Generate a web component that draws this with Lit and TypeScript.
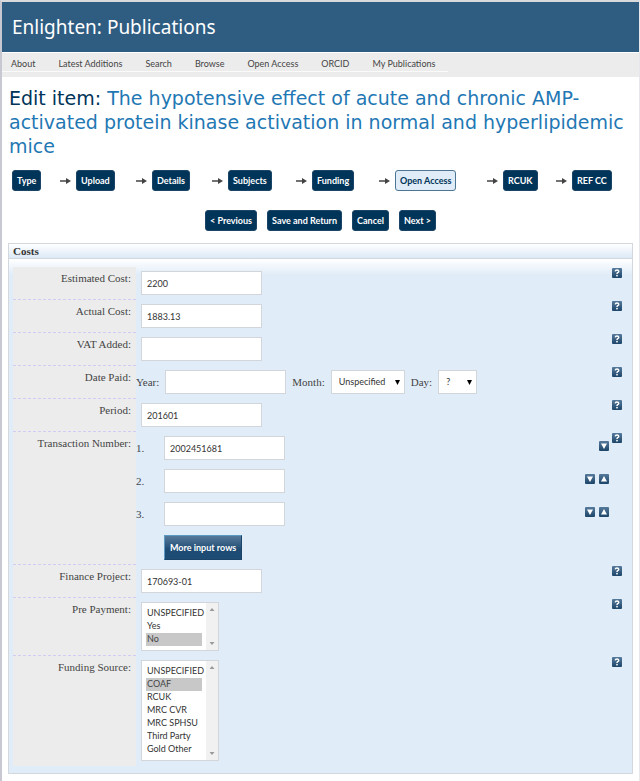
import { LitElement, html, css, svg, nothing } from "lit";
import { customElement, property } from "lit/decorators.js";

const sans = css`Lato, "Noto Sans", sans-serif`;
const serif = css`"Liberation Serif", "DejaVu Serif", serif`;

@customElement("icon-button")
class IconButton extends LitElement {
  @property() kind: "help" | "up" | "down" = "help";
  @property() label = "";

  static styles = css`
    :host {
      display: block;
      width: 10px;
      height: 10px;
    }
    .btn {
      display: block;
      width: 10px;
      height: 10px;
      padding: 0;
      border: 0;
      border-radius: 1px;
      background: linear-gradient(#567a9c, #1c4569);
      color: #fff;
    }
    .glyph {
      display: block;
      width: 10px;
      height: 10px;
    }
  `;

  render() {
    const shape =
      this.kind === "up"
        ? svg`<path d="M5 2L8 7.500H2Z" fill="#fff"/>`
        : this.kind === "down"
          ? svg`<path d="M5 8L2 2.500H8Z" fill="#fff"/>`
          : svg`<path d="M3.200 3.300Q3.400 2 5 2T6.800 3.300Q6.800 4.200 5.700 4.700Q5 5.100 5 6" fill="none" stroke="#fff" stroke-width="1.400"/><rect x="4.200" y="6.900" width="1.600" height="1.500" fill="#fff"/>`;
    return html`<button class="btn" type="button" aria-label=${this.label}>
      <svg class="glyph" viewBox="0 0 10 10" aria-hidden="true">${shape}</svg>
    </button>`;
  }
}

@customElement("list-box")
class ListBox extends LitElement {
  @property({ type: Array }) options: string[] = [];
  @property() value = "";
  @property() label = "";

  static styles = css`
    :host {
      display: block;
    }
    .box {
      display: flex;
      width: 76px;
      border: 1px solid #d2d6da;
      background: #fff;
    }
    .list {
      flex: 1;
      min-width: 0;
      height: auto;
      padding: 4px;
      border: 0;
      outline: 0;
      overflow: hidden;
      background: #fff;
      color: #333;
      font: 9px/13px ${sans};
      scrollbar-width: none;
    }
    .item {
      min-height: 13px;
      padding: 0 1px;
      line-height: 13px;
    }
    .item:checked {
      background: linear-gradient(#c8c8c8, #c8c8c8);
      color: #444;
    }
    .track {
      display: flex;
      flex-direction: column;
      justify-content: space-between;
      width: 12px;
      padding: 5px 0;
      box-sizing: border-box;
      align-items: center;
      background: #f1f1f1;
    }
    .arrow {
      width: 5px;
      height: 3px;
      background: #999;
      clip-path: polygon(0 100%, 50% 0, 100% 100%);
    }
    .arrow.down {
      clip-path: polygon(0 0, 100% 0, 50% 100%);
    }
  `;

  render() {
    return html`<div class="box">
      <select class="list" multiple size=${this.options.length} aria-label=${this.label}>
        ${this.options.map(
          (o) => html`<option class="item" ?selected=${o === this.value}>${o}</option>`
        )}
      </select>
      <span class="track" aria-hidden="true"><i class="arrow"></i><i class="arrow down"></i></span>
    </div>`;
  }
}

@customElement("app-root")
class AppRoot extends LitElement {
  static styles = css`
    :host {
      display: block;
      box-sizing: border-box;
      min-height: 100vh;
      border: solid;
      border-width: 2px 1px 0 2px;
      border-color: #d8dadc #e6e7ea #fff #c8c8d0;
      background: #fff;
      font-family: ${sans};
      color: #333;
    }
    .banner {
      display: flex;
      align-items: center;
      height: 50px;
      padding: 0 10px;
      background: #2f5d82;
      color: #fff;
    }
    .site {
      margin: 0;
      font: 400 19px/24px "Noto Sans", sans-serif;
    }
    .nav {
      padding-bottom: 5px;
      border-top: 1px solid #fff;
      background: #ececec;
    }
    .menu {
      display: flex;
      width: max-content;
      margin: 0;
      padding: 3px 13px 0 9px;
      gap: 23px;
      border-bottom: 1px solid #fafafa;
      list-style: none;
    }
    .menu a {
      display: block;
      color: #444;
      font-size: 9px;
      line-height: 15px;
      text-decoration: none;
    }
    .title {
      margin: 9px 7px 0;
      color: #1f78b4;
      font: 400 19px/24px "DejaVu Sans", sans-serif;
    }
    .title b {
      color: #003459;
      font-weight: 400;
    }
    .steps {
      display: grid;
      grid-template-columns: 64fr 76fr 76fr 84fr 83fr 108fr 69fr 58fr;
      margin: 12px 0 0;
      padding: 0 9px 0 10px;
      list-style: none;
    }
    .step {
      display: flex;
      align-items: center;
      justify-content: space-between;
      padding-right: 5px;
    }
    .pill {
      height: 21px;
      padding: 0 4px;
      border: 1px solid #1b4568;
      border-radius: 3px;
      background: #003459;
      color: #fff;
      font: 700 9px/19px ${sans};
      white-space: nowrap;
    }
    .pill.current {
      border-color: #4d7694;
      background: #e0ecf8;
      color: #003459;
    }
    .to {
      width: 11px;
      height: 6px;
    }
    .actions {
      display: flex;
      justify-content: center;
      gap: 10px;
      margin-top: 19px;
    }
    .panel {
      margin: 12px 6px 6px;
      border: 1px solid #d3d8de;
      background: #e0ecf8;
    }
    .head {
      margin: 0;
      padding-left: 4px;
      border-bottom: 1px solid #d3d8de;
      background: linear-gradient(#fff, #dce9f6);
      color: #333;
      font: 700 11px/14px ${serif};
    }
    .form {
      padding: 8px 10px 7px 4px;
      background: linear-gradient(#fff, #e0ecf8 16px);
    }
    .row {
      display: grid;
      grid-template-columns: 123px 1fr 10px;
      min-height: 33px;
    }
    .name {
      padding: 4px 5px 0 0;
      border-bottom: 1px dashed #d0ccf4;
      background: #ececec;
      color: #444;
      font: 11px/15px ${serif};
      text-align: right;
    }
    .row:last-child .name {
      border-bottom: 0;
    }
    .value {
      display: flex;
      align-items: center;
      gap: 6px;
      padding: 4px 0 5px 5px;
      font: 11px/15px ${serif};
      color: #444;
    }
    .value.flush {
      padding-left: 0;
    }
    .help {
      margin-top: 1px;
    }
    .text,
    .pick {
      box-sizing: border-box;
      width: 121px;
      height: 24px;
      padding: 0 5px;
      border: 1px solid #d2d6da;
      border-radius: 0;
      background: #fff;
      color: #333;
      font: 9px/14px ${sans};
    }
    .pick {
      appearance: none;
      width: 74px;
      padding: 0 7px;
      background: #fff
        url("data:image/svg+xml,%3Csvg xmlns='http://www.w3.org/2000/svg' width='5' height='5'%3E%3Cpath d='M0 0H5L2.5 5Z'/%3E%3C/svg%3E")
        no-repeat right 4px center;
    }
    .pick.day {
      width: 39px;
    }
    .rows {
      flex: 1;
      margin: 0;
      padding: 0;
      list-style: none;
    }
    .entry {
      display: grid;
      grid-template-columns: 28px 1fr auto;
      align-items: center;
      height: 24px;
      margin-bottom: 9px;
    }
    .num {
      font-size: 11px;
    }
    .move {
      display: flex;
      gap: 4px;
      padding: 0 3px 4px 0;
    }
    .more {
      height: 25px;
      margin-left: 28px;
      padding: 0 5px;
      border: 1px solid #1b4568;
      border-top-color: #5c9ac6;
      border-left-color: #5c9ac6;
      background: linear-gradient(#56799a, #1d4b73 60%);
      color: #fff;
      font: 700 9px/20px ${sans};
    }
  `;

  private steps = ["Type", "Upload", "Details", "Subjects", "Funding", "Open Access", "RCUK", "REF CC"];
  private menu = ["About", "Latest Additions", "Search", "Browse", "Open Access", "ORCID", "My Publications"];
  private numbers = ["2002451681", "", ""];

  private row(label: string, id: string, body: unknown, flush = false) {
    return html`<div class="row">
      <label class="name" for=${id}>${label}:</label>
      <div class="value ${flush ? "flush" : ""}">${body}</div>
      <icon-button class="help" label="Help: ${label}"></icon-button>
    </div>`;
  }

  private text(label: string, id: string, value = "") {
    return this.row(label, id, html`<input class="text" id=${id} type="text" .value=${value} />`);
  }

  render() {
    return html`
      <header class="banner"><h1 class="site">Enlighten: Publications</h1></header>
      <nav class="nav">
        <ul class="menu">
          ${this.menu.map((m) => html`<li><a href="#">${m}</a></li>`)}
        </ul>
      </nav>
      <main>
        <h2 class="title">
          <b>Edit item:</b> The hypotensive effect of acute and chronic AMP-activated protein kinase
          activation in normal and hyperlipidemic mice
        </h2>
        <ol class="steps">
          ${this.steps.map(
            (s, i) => html`<li class="step">
              <button type="button" class="pill ${s === "Open Access" ? "current" : ""}">${s}</button>
              ${i < this.steps.length - 1
                ? html`<svg class="to" viewBox="0 0 11 6" aria-hidden="true">
                    <path d="M0 2.300H6V0L11 3L6 6V3.700H0Z" fill="#444" />
                  </svg>`
                : nothing}
            </li>`
          )}
        </ol>
        <div class="actions">
          ${["< Previous", "Save and Return", "Cancel", "Next >"].map(
            (a) => html`<button type="button" class="pill">${a}</button>`
          )}
        </div>
        <section class="panel">
          <h3 class="head">Costs</h3>
          <form class="form">
            ${this.text("Estimated Cost", "estimated", "2200")}
            ${this.text("Actual Cost", "actual", "1883.13")}
            ${this.text("VAT Added", "vat")}
            ${this.row(
              "Date Paid",
              "year",
              html`<label for="year">Year:</label>
                <input class="text" id="year" type="text" />
                <label for="month">Month:</label>
                <select class="pick" id="month"><option>Unspecified</option></select>
                <label for="day">Day:</label>
                <select class="pick day" id="day"><option>?</option></select>`,
              true
            )}
            ${this.text("Period", "period", "201601")}
            ${this.row(
              "Transaction Number",
              "number1",
              html`<ol class="rows">
                  ${this.numbers.map(
                    (n, i) => html`<li class="entry">
                      <label class="num" for="number${i + 1}">${i + 1}.</label>
                      <input class="text" id="number${i + 1}" type="text" .value=${n} />
                      <span class="move">
                        <icon-button kind="down" label="Move down"></icon-button>
                        ${i > 0 ? html`<icon-button kind="up" label="Move up"></icon-button>` : nothing}
                      </span>
                    </li>`
                  )}
                  <li><button type="button" class="more">More input rows</button></li>
                </ol>`,
              true
            )}
            ${this.text("Finance Project", "finance", "170693-01")}
            ${this.row(
              "Pre Payment",
              "prepayment",
              html`<list-box id="prepayment" label="Pre Payment" .options=${["UNSPECIFIED", "Yes", "No"]} value="No"></list-box>`
            )}
            ${this.row(
              "Funding Source",
              "funding",
              html`<list-box
                id="funding"
                label="Funding Source"
                .options=${["UNSPECIFIED", "COAF", "RCUK", "MRC CVR", "MRC SPHSU", "Third Party", "Gold Other"]}
                value="COAF"
              ></list-box>`
            )}
          </form>
        </section>
      </main>
    `;
  }
}
